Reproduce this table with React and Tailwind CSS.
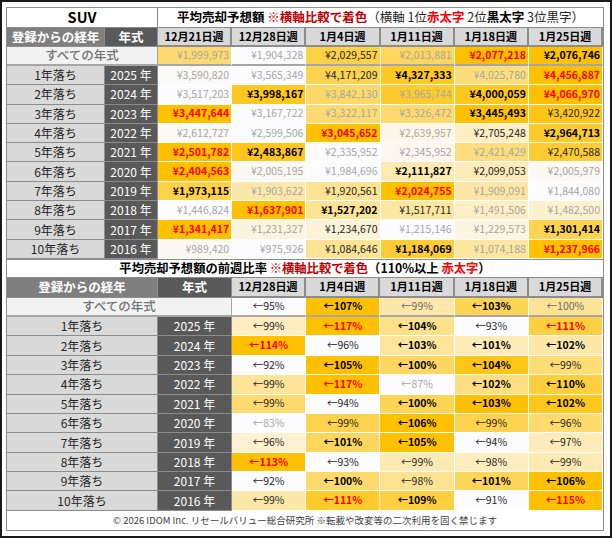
import React from 'react'

const WEEKS = ['12月21日週', '12月28日週', '1月4日週', '1月11日週', '1月18日週', '1月25日週']

// 平均売却予想額: values per week, text style per cell (r=赤太字 b=黒太字 n=黒字 g=グレー)
const PRICE_ALL = { values: [1999973, 1904328, 2029557, 2013881, 2077218, 2076746], marks: 'ggngrb' }

const PRICE_ROWS = [
  { label: '1年落ち', year: 2025, values: [3590820, 3565349, 4171209, 4327333, 4025780, 4456887], marks: 'ggnbgr' },
  { label: '2年落ち', year: 2024, values: [3517203, 3998167, 3842130, 3965744, 4000059, 4066970], marks: 'gbggbr' },
  { label: '3年落ち', year: 2023, values: [3447644, 3167722, 3322117, 3326472, 3445493, 3420922], marks: 'rgggbn' },
  { label: '4年落ち', year: 2022, values: [2612727, 2599506, 3045652, 2639957, 2705248, 2964713], marks: 'ggrgnb' },
  { label: '5年落ち', year: 2021, values: [2501782, 2483867, 2335952, 2345952, 2421429, 2470588], marks: 'rbgggn' },
  { label: '6年落ち', year: 2020, values: [2404563, 2005195, 1984696, 2111827, 2099053, 2005979], marks: 'rggbng' },
  { label: '7年落ち', year: 2019, values: [1973115, 1903622, 1920561, 2024755, 1909091, 1844080], marks: 'bgnrgg' },
  { label: '8年落ち', year: 2018, values: [1446824, 1637901, 1527202, 1517711, 1491506, 1482500], marks: 'grbngg' },
  { label: '9年落ち', year: 2017, values: [1341417, 1231327, 1234670, 1215146, 1229573, 1301414], marks: 'rgnggb' },
  { label: '10年落ち', year: 2016, values: [989420, 975926, 1084646, 1184069, 1074188, 1237966], marks: 'ggnbgr' },
]

const RATE_ALL = { values: [95, 107, 99, 103, 100], marks: 'nbmbm' }

const RATE_ROWS = [
  { label: '1年落ち', year: 2025, values: [99, 117, 104, 93, 111], marks: 'nrbnr' },
  { label: '2年落ち', year: 2024, values: [114, 96, 103, 101, 102], marks: 'rnbbb' },
  { label: '3年落ち', year: 2023, values: [92, 105, 100, 104, 99], marks: 'nbbbn' },
  { label: '4年落ち', year: 2022, values: [99, 117, 87, 102, 110], marks: 'nrgbb' },
  { label: '5年落ち', year: 2021, values: [99, 94, 100, 103, 102], marks: 'nnbbb' },
  { label: '6年落ち', year: 2020, values: [83, 99, 106, 99, 96], marks: 'gnbnn' },
  { label: '7年落ち', year: 2019, values: [96, 101, 105, 94, 97], marks: 'nbbnn' },
  { label: '8年落ち', year: 2018, values: [113, 93, 99, 98, 99], marks: 'rnnnn' },
  { label: '9年落ち', year: 2017, values: [92, 100, 98, 101, 106], marks: 'nbnbb' },
  { label: '10年落ち', year: 2016, values: [99, 111, 109, 91, 115], marks: 'nrbnr' },
]

const MARK_CLASS = {
  r: 'font-bold text-[#ff0000]',
  b: 'font-bold text-black',
  n: 'text-[#262626]',
  m: 'text-[#6b6b6b]',
  g: 'text-[#a6a6a6]',
}

// row-wise colour scale, white -> #ffc000
function heat(v, values) {
  const min = Math.min(...values)
  const max = Math.max(...values)
  const t = max === min ? 0 : (v - min) / (max - min)
  const r = Math.round(252 + 3 * t)
  const g = Math.round(252 - 60 * t)
  const b = Math.round(255 - 255 * t)
  return `rgb(${r},${g},${b})`
}

const yen = v => '¥' + v.toLocaleString('en-US')

function LabelCells({ label, year, yearWidth }) {
  return (
    <>
      <div className="w-[98px] shrink-0 bg-[#d9d9d9] border-r border-b border-[#8c8c8c] flex items-center justify-center text-[12px] text-[#262626]">
        {label}
      </div>
      <div className={`${yearWidth} shrink-0 bg-[#595959] border-r border-b border-[#8c8c8c] flex items-center justify-center text-[12px] text-white`}>
        {year} 年
      </div>
    </>
  )
}

function PriceCell({ v, values, mark, thick }) {
  return (
    <div
      className={`flex-1 min-w-0 border-r border-white flex items-center justify-end pr-[2px] text-[10.5px] ${thick ? 'border-b-2 border-b-[#a6a6a6]' : 'border-b'} ${MARK_CLASS[mark]}`}
      style={{ backgroundColor: heat(v, values) }}
    >
      {yen(v)}
    </div>
  )
}

function RateCell({ v, values, mark, thick }) {
  return (
    <div
      className={`flex-1 min-w-0 border-r border-white flex items-center justify-center text-[10.5px] ${thick ? 'border-b-2 border-b-[#a6a6a6]' : 'border-b'} ${MARK_CLASS[mark]}`}
      style={{ backgroundColor: heat(v, values) }}
    >
      ←{v}%
    </div>
  )
}

function WeekHead({ children }) {
  return (
    <div className="flex-1 min-w-0 bg-[#d9d9d9] border-r-2 border-b-2 border-[#8c8c8c] flex items-center justify-center text-[11px] font-bold text-black">
      {children}
    </div>
  )
}

export default function App() {
  return (
    <div className="w-[612px] h-[538px] bg-white border-2 border-[#1a1a1a] pl-1 pt-[5px] font-['Noto_Sans_CJK_JP','Noto_Sans',sans-serif] leading-none">
      <div className="w-[598px] border border-[#8c8c8c] flex flex-col">
        {/* ── 平均売却予想額 ── */}
        <div className="flex h-[20px] border-b border-[#8c8c8c]">
          <div className="w-[151px] shrink-0 border-r border-[#8c8c8c] flex items-center justify-center text-[14.5px] font-bold text-black">
            SUV
          </div>
          <div className="flex-1 flex items-center justify-center text-[12.5px] text-[#262626] whitespace-nowrap">
            <span>
              <span className="font-bold text-black">平均売却予想額 </span>
              <span className="font-bold text-[#c00000]">※横軸比較で着色</span>
              （横軸 1位<span className="font-bold text-[#ff0000]">赤太字</span> 2位<span className="font-bold text-black">黒太字</span> 3位黒字）
            </span>
          </div>
        </div>

        <div className="flex h-[19px]">
          <div className="w-[98px] shrink-0 bg-[#7f7f7f] border-r border-b border-[#8c8c8c] flex items-center justify-center text-[12.5px] font-bold text-white">
            登録からの経年
          </div>
          <div className="w-[53px] shrink-0 bg-[#595959] border-r border-b border-[#8c8c8c] flex items-center justify-center text-[12.5px] font-bold text-white">
            年式
          </div>
          {WEEKS.map(w => <WeekHead key={w}>{w}</WeekHead>)}
        </div>

        <div className="flex h-[19px]">
          <div className="w-[151px] shrink-0 bg-[#f2f2f2] border-r border-b-2 border-[#a6a6a6] flex items-center justify-center text-[12.5px] font-medium text-[#737373]">
            すべての年式
          </div>
          {PRICE_ALL.values.map((v, i) => (
            <PriceCell key={i} v={v} values={PRICE_ALL.values} mark={PRICE_ALL.marks[i]} thick />
          ))}
        </div>

        {PRICE_ROWS.map(row => (
          <div key={row.label} className="flex h-[19.3px]">
            <LabelCells label={row.label} year={row.year} yearWidth="w-[53px]" />
            {row.values.map((v, i) => (
              <PriceCell key={i} v={v} values={row.values} mark={row.marks[i]} />
            ))}
          </div>
        ))}

        {/* ── 前週比率 ── */}
        <div className="flex h-[19px] items-center justify-center border-t border-b border-[#8c8c8c] text-[12.3px] font-bold text-black whitespace-nowrap">
          <span>
            平均売却予想額の前週比率 <span className="text-[#c00000]">※横軸比較で着色</span>（110%以上 <span className="text-[#ff0000]">赤太字</span>）
          </span>
        </div>

        <div className="flex h-[20px]">
          <div className="w-[151px] shrink-0 bg-[#7f7f7f] border-r border-b border-[#8c8c8c] flex items-center justify-center text-[12.5px] font-bold text-white">
            登録からの経年
          </div>
          <div className="w-[74px] shrink-0 bg-[#595959] border-r border-b border-[#8c8c8c] flex items-center justify-center text-[12.5px] font-bold text-white">
            年式
          </div>
          {WEEKS.slice(1).map(w => <WeekHead key={w}>{w}</WeekHead>)}
        </div>

        <div className="flex h-[19px]">
          <div className="w-[225px] shrink-0 bg-[#f2f2f2] border-r border-b-2 border-[#a6a6a6] flex items-center justify-center text-[12.5px] font-medium text-[#737373]">
            すべての年式
          </div>
          {RATE_ALL.values.map((v, i) => (
            <RateCell key={i} v={v} values={RATE_ALL.values} mark={RATE_ALL.marks[i]} thick />
          ))}
        </div>

        {RATE_ROWS.map(row => (
          <div key={row.label} className="flex h-[19.4px]">
            <div className="w-[151px] shrink-0 bg-[#d9d9d9] border-r border-b border-[#8c8c8c] flex items-center justify-center text-[12px] text-[#262626]">
              {row.label}
            </div>
            <div className="w-[74px] shrink-0 bg-[#595959] border-r border-b border-[#8c8c8c] flex items-center justify-center text-[12px] text-white">
              {row.year} 年
            </div>
            {row.values.map((v, i) => (
              <RateCell key={i} v={v} values={row.values} mark={row.marks[i]} />
            ))}
          </div>
        ))}

        <div className="flex h-[19px] items-center justify-center text-[9.5px] text-[#404040] whitespace-nowrap">
          © 2026 IDOM Inc. リセールバリュー総合研究所 ※転載や改変等の二次利用を固く禁じます
        </div>
      </div>
    </div>
  )
}
